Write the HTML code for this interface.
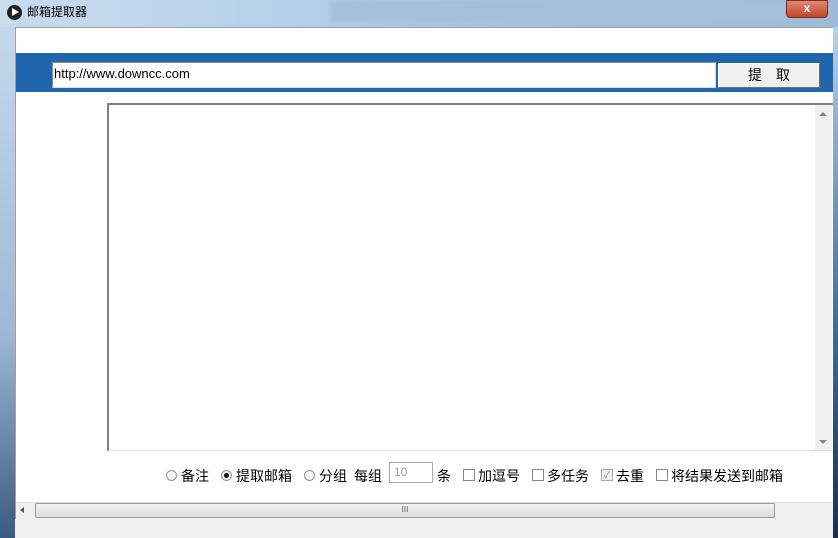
<!DOCTYPE html>
<html><head><meta charset="utf-8"><style>
*{margin:0;padding:0;box-sizing:border-box}
body{width:838px;height:538px;overflow:hidden;position:relative;background:#f0f0f0;font-family:"Liberation Sans","Noto Sans CJK SC",sans-serif}
.a{position:absolute}
.cn{font-family:"Noto Sans CJK SC","WenQuanYi Zen Hei",sans-serif;font-size:14px;color:#000;line-height:16px;white-space:nowrap}
.r{position:absolute;width:11px;height:11px;border-radius:50%;border:1px solid #8a98a8;background:#f4f4f4;top:470px}
</style></head><body>
<div class="a" style="left:0;top:0;width:838px;height:27px;background:linear-gradient(90deg,#c9dcee 0%,#b8d2ec 30%,#a6c3e0 60%,#9dbbd8 100%)"></div>
<div class="a" style="left:330px;top:0;width:460px;height:22px;background:#a4bfd9;filter:blur(3px)"></div>
<div class="a" style="left:7px;top:5px;width:15px;height:15px;border-radius:50%;background:#222"></div>
<div class="a" style="left:12px;top:8px;width:0;height:0;border-left:7px solid #fff;border-top:4.5px solid transparent;border-bottom:4.5px solid transparent"></div>
<div class="a cn" style="left:27px;top:4px;font-size:12px">邮箱提取器</div>
<div class="a" style="left:786px;top:0;width:42px;height:18px;border-radius:0 0 4px 4px;background:linear-gradient(#e08a78,#c24428);border:1px solid #7a3020;color:#fff;font-weight:bold;font-size:12px;text-align:center;line-height:15px">x</div>
<div class="a" style="left:0;top:27px;width:15px;height:511px;background:linear-gradient(#c4d8ec,#9db9d6 60%,#3a5a80)"></div>
<div class="a" style="left:833px;top:27px;width:5px;height:511px;background:linear-gradient(#b9d1ea,#3a6aa0 60%,#1a3050)"></div>
<div class="a" style="left:15px;top:27px;width:818px;height:492px;background:#fff;border-left:1px solid #a0a0a0;border-top:1px solid #a0a0a0"></div>
<div class="a" style="left:15px;top:519px;width:818px;height:19px;background:#f0f0f0"></div>
<div class="a" style="left:16px;top:53px;width:817px;height:39px;background:#1f66ad"></div>
<div class="a" style="left:52px;top:62px;width:664px;height:26px;background:#fff;border:1px solid #8a8a8a;border-right-color:#ddd;border-bottom-color:#ddd"></div>
<div class="a" style="left:54px;top:66px;font-size:13px;color:#000">http://www.downcc.com</div>
<div class="a cn" style="left:718px;top:63px;width:102px;height:25px;background:#f0f0f0;border:1px solid #fff;border-right-color:#707070;border-bottom-color:#707070;text-align:center;line-height:22px;letter-spacing:14px;padding-left:14px">提取</div>
<div class="a" style="left:107px;top:103px;width:726px;height:348px;border-left:2px solid #808080;border-top:2px solid #808080;border-bottom:1px solid #ddd"></div>
<div class="a" style="left:815px;top:105px;width:17px;height:345px;background:#f0f0f0"></div>
<div class="a" style="left:819px;top:112px;border-left:4px solid transparent;border-right:4px solid transparent;border-bottom:4px solid #888"></div>
<div class="a" style="left:819px;top:440px;border-left:4px solid transparent;border-right:4px solid transparent;border-top:4px solid #888"></div>
<div class="r" style="left:166px"></div>
<div class="a cn" style="left:181px;top:468px">备注</div>
<div class="r" style="left:221px"></div>
<div class="a" style="left:224px;top:473px;width:5px;height:5px;border-radius:50%;background:#111"></div>
<div class="a cn" style="left:236px;top:468px">提取邮箱</div>
<div class="r" style="left:304px"></div>
<div class="a cn" style="left:319px;top:468px">分组</div>
<div class="a cn" style="left:354px;top:468px">每组</div>
<div class="a" style="left:389px;top:462px;width:44px;height:21px;border:1px solid #aaa;background:#fff;color:#999;font-size:12px;padding-left:4px;line-height:19px">10</div>
<div class="a cn" style="left:437px;top:468px">条</div>
<div class="a" style="left:463px;top:469px;width:12px;height:12px;border:1px solid #888"></div>
<div class="a cn" style="left:478px;top:468px">加逗号</div>
<div class="a" style="left:532px;top:469px;width:12px;height:12px;border:1px solid #888"></div>
<div class="a cn" style="left:547px;top:468px">多任务</div>
<div class="a" style="left:601px;top:469px;width:12px;height:12px;border:1px solid #aaa;background:#f0f0f0;font-size:9px;color:#888;text-align:center;line-height:10px">✓</div>
<div class="a cn" style="left:616px;top:468px">去重</div>
<div class="a" style="left:656px;top:469px;width:12px;height:12px;border:1px solid #888"></div>
<div class="a cn" style="left:671px;top:468px">将结果发送到邮箱</div>
<div class="a" style="left:16px;top:502px;width:817px;height:17px;background:#f0f0f0;border-top:1px solid #ddd"></div>
<div class="a" style="left:20px;top:507px;border-top:3px solid transparent;border-bottom:3px solid transparent;border-right:4px solid #555"></div>
<div class="a" style="left:35px;top:503px;width:740px;height:15px;border:1px solid #999;border-radius:2px;background:linear-gradient(#f2f2f2,#dcdcdc);font-size:8px;text-align:center;color:#555;line-height:12px">III</div>
</body></html>
